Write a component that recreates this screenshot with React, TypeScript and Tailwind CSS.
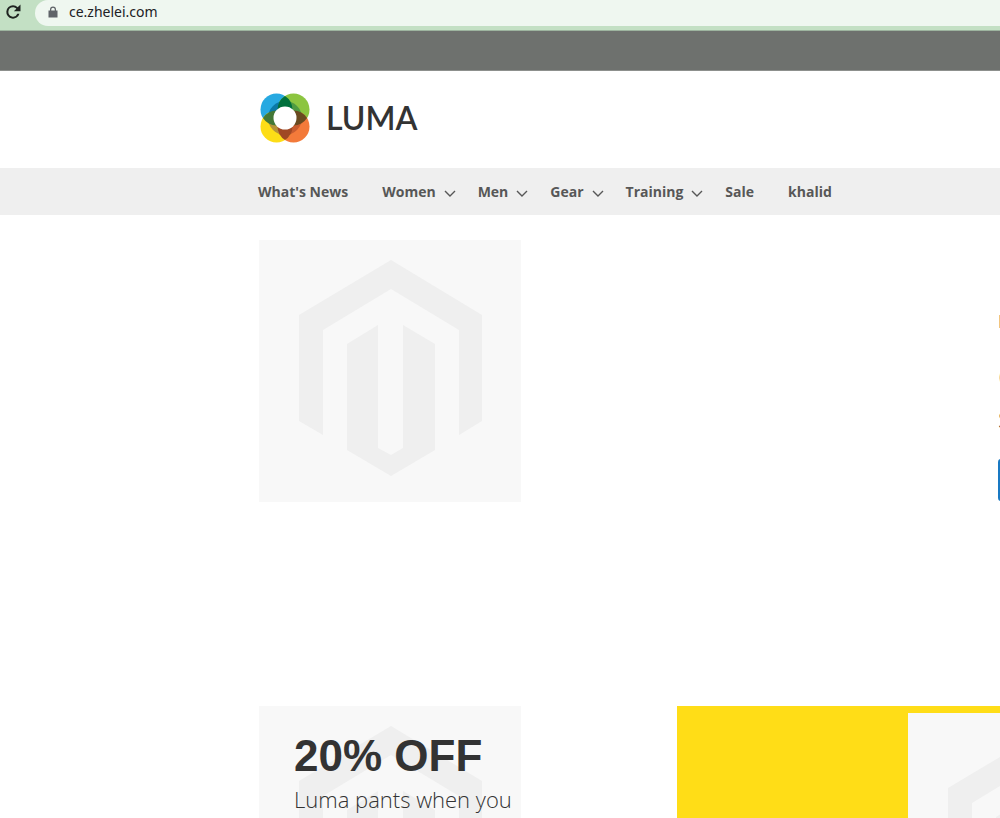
import React from 'react'

interface NavItem {
    label: string;
    hasMenu?: boolean;
}

const navItems: NavItem[] = [
    { label: "What's News" },
    { label: 'Women', hasMenu: true },
    { label: 'Men', hasMenu: true },
    { label: 'Gear', hasMenu: true },
    { label: 'Training', hasMenu: true },
    { label: 'Sale' },
    { label: 'khalid' },
]

const BrowserBar: React.FC = () => (
    <div className="flex h-[31px] items-start border-b border-[#9db49f] bg-[#c3e0c4]">
        <button type="button" aria-label="Reload" className="ml-[3px] mt-[2px] h-5 w-5 shrink-0">
            <svg viewBox="0 0 24 24" className="h-full w-full fill-[#1f2421]">
                <path d="M17.65 6.35A7.95 7.95 0 0 0 12 4a8 8 0 1 0 7.73 10h-2.5A5.6 5.6 0 1 1 12 6.3c1.6 0 3 .65 4.05 1.7L13 11h8V3z" />
            </svg>
        </button>
        <label className="ml-3 flex h-[26px] flex-1 items-center rounded-l-full bg-[#eff7f0] pb-[2px] pl-3">
            <svg viewBox="0 0 24 24" className="h-3 w-3 shrink-0 fill-[#5f6368]">
                <path d="M21 9h-3V7A6 6 0 0 0 6 7v2H3v14h18zM8.5 9V7a3.5 3.5 0 0 1 7 0v2z" />
            </svg>
            <input
                type="text"
                aria-label="Address"
                defaultValue="ce.zhelei.com"
                className="ml-[10px] min-w-0 flex-1 bg-transparent font-['Noto_Sans',sans-serif] text-sm text-[#202124] outline-none"
            />
        </label>
    </div>
)

const Logo: React.FC = () => (
    <a href="#" aria-label="LUMA" className="inline-flex items-center gap-4">
        <svg viewBox="0 0 50 50" className="h-[50px] w-[50px]">
            <clipPath id="ring">
                <circle cx="25" cy="25" r="17" />
            </clipPath>
            <circle cx="16.5" cy="16.5" r="16" fill="#27a9e1" />
            <circle cx="33.5" cy="16.5" r="16" fill="#8cc540" />
            <circle cx="33.5" cy="33.5" r="16" fill="#f37a3a" />
            <circle cx="16.5" cy="33.5" r="16" fill="#fddd17" />
            {/* darker inner ring, one shade per petal */}
            <g clipPath="url(#ring)">
                <path d="M0 0h25v25H0z" fill="#0b79a6" />
                <path d="M25 0h25v25H25z" fill="#4f9b42" />
                <path d="M25 25h25v25H25z" fill="#c85c30" />
                <path d="M0 25h25v25H0z" fill="#b5933a" />
            </g>
            {/* lenses where two petals overlap */}
            <path d="M25 2.950a16 16 0 0 1 0 27.100a16 16 0 0 1 0-27.100z" fill="#00703c" />
            <path d="M47.050 25a16 16 0 0 1-27.100 0a16 16 0 0 1 27.100 0z" fill="#694a20" />
            <path d="M25 47.050a16 16 0 0 1 0-27.100a16 16 0 0 1 0 27.100z" fill="#a04824" />
            <path d="M2.950 25a16 16 0 0 1 27.100 0a16 16 0 0 1-27.100 0z" fill="#437837" />
            <circle cx="25" cy="25" r="11.5" fill="#fff" />
        </svg>
        <span className="font-[Lato,sans-serif] text-[32px] font-semibold leading-10 text-[#333]">LUMA</span>
    </a>
)

// placeholder shown while a product image is missing
const Placeholder: React.FC = () => (
    <svg viewBox="0 0 262 262" className="h-[262px] w-[262px] shrink-0 bg-[#f8f8f8]">
        <path
            fill="#efefef"
            d="M132 20l91 55v106l-23 14V90l-68-41-68 41v105l-24-14V75zM119 85v123l13 7 12-7V85l32 19v106l-44 26-44-26V104z"
        />
    </svg>
)

const App: React.FC = () => {
    return (
        <div className="h-screen overflow-hidden bg-white font-['Open_Sans',sans-serif] text-[#333]">
            <BrowserBar />
            <div className="h-10 border-b border-[#8d908d] bg-[#6e716e]"></div>

            <header className="flex h-[97px] items-center pb-[3px] pl-[260px]">
                <Logo />
            </header>

            <nav className="flex h-[47px] items-center bg-[#efefef] pl-[258px] text-sm font-bold text-[#575757]">
                {navItems.map((item) => (
                    <a key={item.label} href="#" className={item.hasMenu ? 'mr-[22px] flex items-center gap-2' : 'mr-[34px] flex items-center'}>
                        {item.label}
                        {item.hasMenu && (
                            <svg viewBox="0 0 12 8" className="mt-1 h-2 w-3 fill-none stroke-[#575757] stroke-[1.4]">
                                <path d="M1 1l5 5 5-5" />
                            </svg>
                        )}
                    </a>
                ))}
            </nav>

            <main className="pl-[259px] pt-[25px]">
                <section className="flex h-[466px] items-start">
                    <div className="w-[739px] shrink-0">
                        <Placeholder />
                    </div>
                    <div className="w-[420px] shrink-0 pt-[69px]">
                        <p className="text-lg leading-6">New Luma Yoga Collection</p>
                        <h2 className="mt-6 text-[30px] font-light leading-10">
                            Get fit and look fab in new
                            <br />
                            seasonal styles
                        </h2>
                        <button type="button" className="mt-[22px] h-[42px] rounded-[3px] bg-[#1979c3] px-4 text-lg font-semibold text-white">
                            Shop New Yoga
                        </button>
                    </div>
                </section>

                <section className="flex items-start">
                    <div className="relative w-[418px] shrink-0">
                        <Placeholder />
                        <div className="absolute left-[35px] top-[25px]">
                            <strong className="block font-['Liberation_Sans',Arial,sans-serif] text-[44px] leading-[50px]">20% OFF</strong>
                            <span className="block whitespace-nowrap text-[22px] font-light leading-9">Luma pants when you</span>
                        </div>
                    </div>
                    <div className="flex flex-1 bg-[#ffdd17] pl-[231px] pt-[7px]">
                        <Placeholder />
                    </div>
                </section>
            </main>
        </div>
    )
}

export default App
